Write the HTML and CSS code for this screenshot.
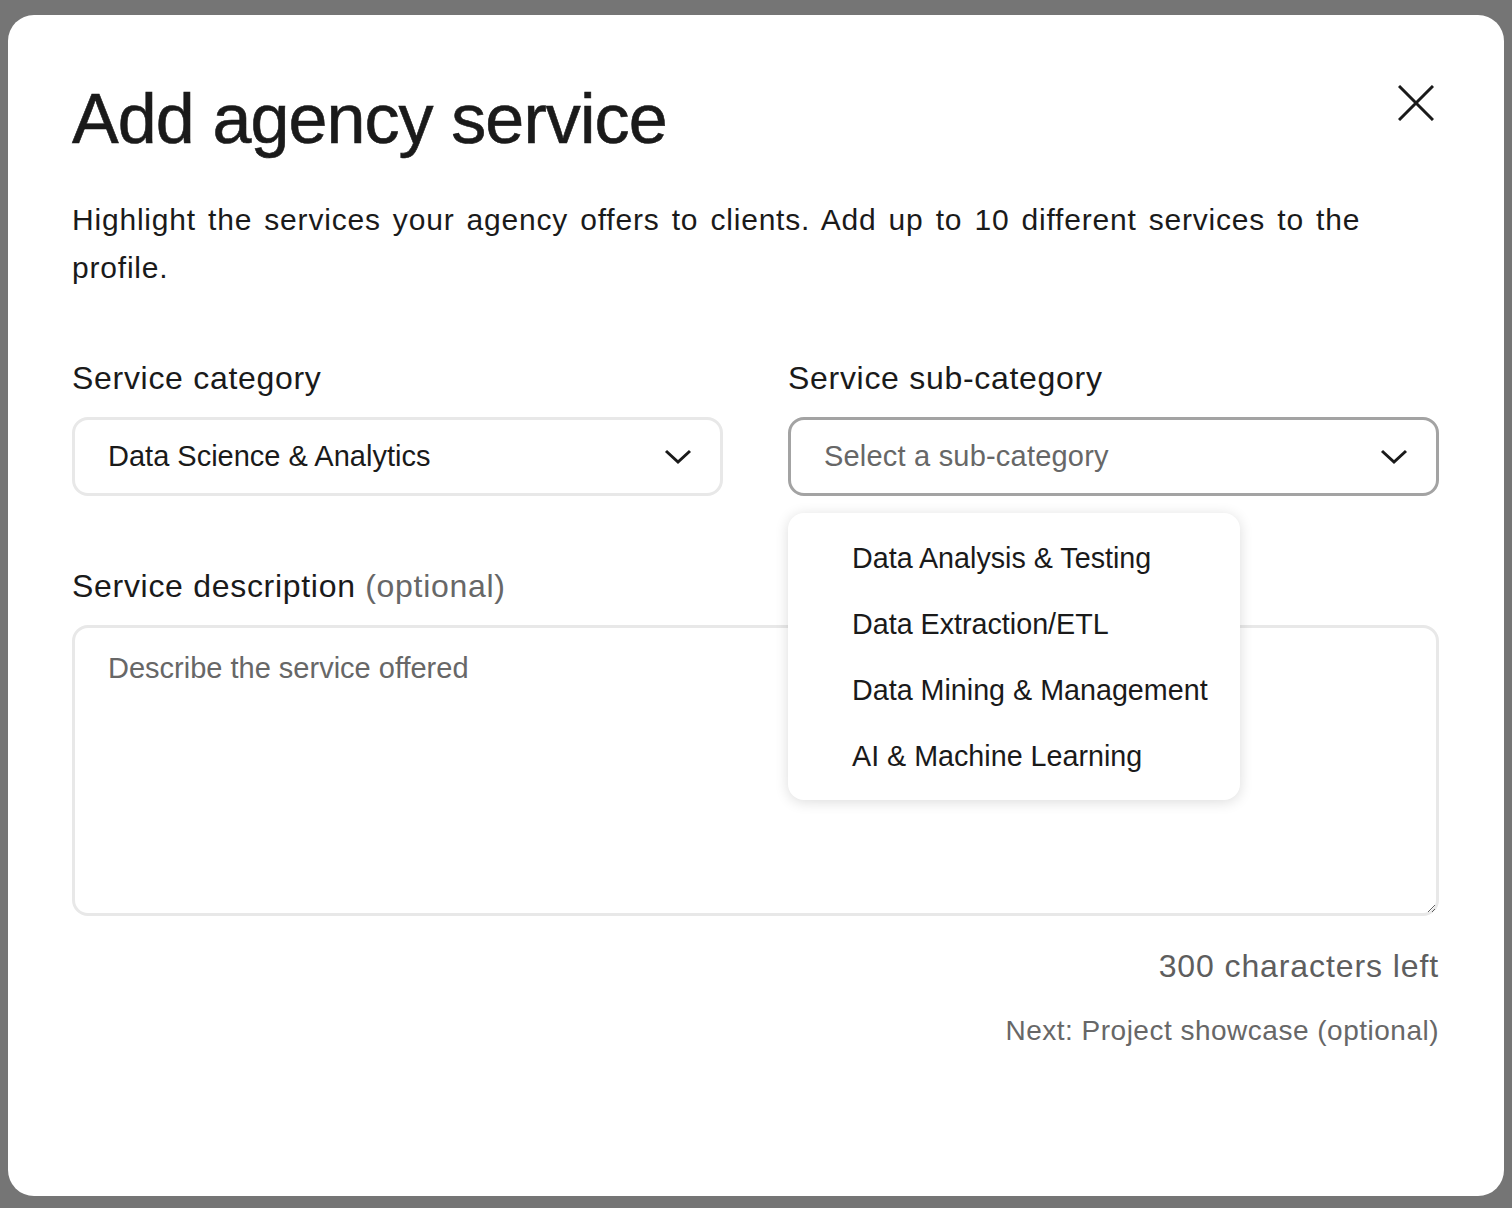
FILE: index.html
```html
<!DOCTYPE html>
<html lang="en">
<head>
    <meta charset="UTF-8">
    <meta name="viewport" content="width=device-width, initial-scale=1.0">
    <title>Add agency service</title>
    <link rel="stylesheet" href="styles.css">
</head>
<body>

<!-- モーダル -->
<div class="modal">
    <div class="modal-header">
        <h1 class="modal-title">Add agency service</h1>
        <button class="close-button" aria-label="Close">
            <svg width="36" height="36" viewBox="0 0 36 36">
                <path d="M1 1 L35 35 M35 1 L1 35" stroke="#1a1a1a" stroke-width="3" fill="none"/>
            </svg>
        </button>
    </div>

    <p class="modal-intro">
        Highlight the services your agency offers to clients. Add up to 10 different services to the profile.
    </p>

    <div class="field-row">
        <div class="field">
            <label class="field-label">Service category</label>
            <div class="select-box">
                <span class="select-value">Data Science &amp; Analytics</span>
                <svg class="chevron" width="28" height="16" viewBox="0 0 28 16">
                    <path d="M2 2 L14 13 L26 2" stroke="#1a1a1a" stroke-width="3" fill="none"/>
                </svg>
            </div>
        </div>

        <div class="field">
            <label class="field-label">Service sub-category</label>
            <div class="select-box select-box-open">
                <span class="select-placeholder">Select a sub-category</span>
                <svg class="chevron" width="28" height="16" viewBox="0 0 28 16">
                    <path d="M2 2 L14 13 L26 2" stroke="#1a1a1a" stroke-width="3" fill="none"/>
                </svg>
            </div>

            <!-- ドロップダウン -->
            <ul class="dropdown-menu">
                <li>Data Analysis &amp; Testing</li>
                <li>Data Extraction/ETL</li>
                <li>Data Mining &amp; Management</li>
                <li>AI &amp; Machine Learning</li>
            </ul>
        </div>
    </div>

    <label class="field-label description-label">Service description <span class="optional">(optional)</span></label>
    <textarea class="description" placeholder="Describe the service offered"></textarea>

    <p class="char-count">300 characters left</p>
    <p class="next-step">Next: Project showcase (optional)</p>
</div>

</body>
</html>
```

FILE: styles.css
```css
/* 背景オーバーレイ */
body {
    margin: 0;
    padding: 15px 8px 0 8px;
    height: 1208px;
    box-sizing: border-box;
    overflow: hidden;
    background-color: #757575;
    font-family: "Liberation Sans", Arial, sans-serif;
    color: #1a1a1a;
}

/* モーダル本体 */
.modal {
    width: 1496px;
    height: 1181px;
    box-sizing: border-box;
    background-color: white;
    border-radius: 26px;
    padding: 62px 65px 0 64px;
    display: flex;
    flex-direction: column;
}

.modal-header {
    display: flex;
    justify-content: space-between;
    align-items: flex-start;
}

.modal-title {
    margin: 0;
    font-size: 70px;
    line-height: 84px;
    font-weight: 500;
    letter-spacing: -0.9px;
    -webkit-text-stroke: 0.6px #1a1a1a;
}

.close-button {
    width: 46px;
    height: 46px;
    margin-top: 3px;
    padding: 0;
    border: none;
    background: none;
    display: flex;
    justify-content: center;
    align-items: center;
    cursor: pointer;
}

.modal-intro {
    margin: 35px 0 0 0;
    font-size: 30px;
    line-height: 48px;
    letter-spacing: 0.8px;
    word-spacing: 3px;
}

/* 入力欄 */
.field-row {
    display: grid;
    grid-template-columns: 1fr 1fr;
    gap: 65px;
    margin-top: 68px;
}

.field {
    position: relative;
    display: flex;
    flex-direction: column;
}

.field-label {
    font-size: 32px;
    line-height: 36px;
    letter-spacing: 0.7px;
    margin-bottom: 21px;
}

.select-box {
    height: 79px;
    box-sizing: border-box;
    border: 3px solid #e8e8e8;
    border-radius: 16px;
    padding: 0 28px 0 33px;
    display: flex;
    justify-content: space-between;
    align-items: center;
    font-size: 29px;
}

.select-box-open {
    border-color: #a3a3a3;
}

.select-placeholder {
    color: #676767;
    letter-spacing: 0.2px;
}

.chevron {
    flex-shrink: 0;
}

/* ドロップダウン */
.dropdown-menu {
    position: absolute;
    top: 153px;
    left: 0;
    width: 452px;
    margin: 0;
    padding: 12px 0 11px 0;
    list-style: none;
    background-color: white;
    border-radius: 16px;
    box-shadow: 0 2px 14px rgba(0, 0, 0, 0.14);
    z-index: 2;
}

.dropdown-menu li {
    height: 66px;
    padding-left: 64px;
    display: flex;
    align-items: center;
    font-size: 28.7px;
}

.description-label {
    margin-top: 72px;
}

.optional {
    color: #676767;
}

.description {
    height: 291px;
    box-sizing: border-box;
    border: 3px solid #e8e8e8;
    border-radius: 16px;
    padding: 22px 33px;
    font-family: "Liberation Sans", Arial, sans-serif;
    font-size: 29px;
    line-height: 36px;
    color: #1a1a1a;
    outline: none;
}

.description::placeholder {
    color: #676767;
}

.char-count {
    margin: 32px 0 0 0;
    text-align: right;
    font-size: 32px;
    line-height: 36px;
    letter-spacing: 0.9px;
    color: #5e5e5e;
}

.next-step {
    margin: 31px 0 0 0;
    text-align: right;
    font-size: 28px;
    line-height: 32px;
    letter-spacing: 0.5px;
    color: #676767;
}
```
